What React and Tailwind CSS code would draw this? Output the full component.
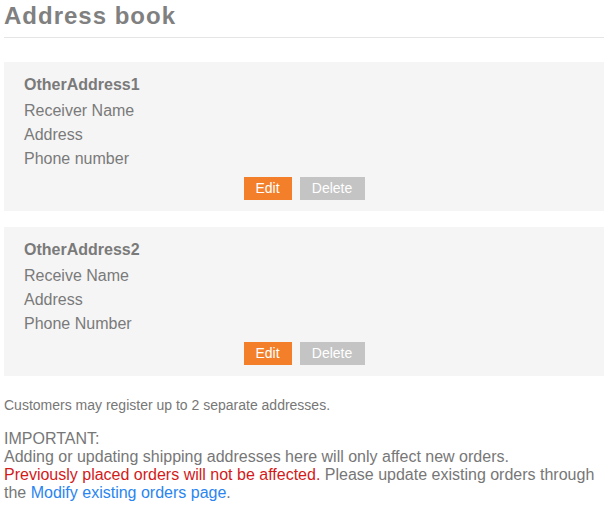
const addresses = [
  { id: 1, title: 'OtherAddress1', lines: ['Receiver Name', 'Address', 'Phone number'] },
  { id: 2, title: 'OtherAddress2', lines: ['Receive Name', 'Address', 'Phone Number'] },
];

const AddressCard = ({ item }) => (
  <div className="bg-[#f5f5f5] px-5 pt-[11px] pb-[11px] mb-4">
    <div className="font-bold text-base leading-6 mb-[2px] text-[#7a7a7a]">{item.title}</div>
    {item.lines.map((l) => (
      <div key={l} className="text-base leading-6 text-[#7a7a7a]">{l}</div>
    ))}
    <div className="flex justify-center gap-2 mt-[6px]">
      <button className="w-12 h-[23px] bg-[#f47f2b] text-white text-sm leading-[23px]">Edit</button>
      <button className="w-[65px] h-[23px] bg-[#c4c4c4] text-white text-sm leading-[23px]">Delete</button>
    </div>
  </div>
);

export default function App() {
  return (
    <div className="bg-white min-h-screen" style={{ fontFamily: '"Liberation Sans", Arial, sans-serif' }}>
      <div className="w-[600px] ml-1">
        {/* tiêu đề */}
        <h1 className="text-2xl font-bold tracking-[1px] text-[#808080] leading-8 pb-[5px] border-b border-[#e5e5e5]">
          Address book
        </h1>

        <div className="mt-6">
          {addresses.map((a) => (
            <AddressCard key={a.id} item={a} />
          ))}
        </div>

        <p className="text-sm text-[#777] leading-5 mt-[19px]">Customers may register up to 2 separate addresses.</p>

        <div className="mt-[15px] text-base leading-[18px] text-[#777]">
          <div>IMPORTANT:</div>
          <div>Adding or updating shipping addresses here will only affect new orders.</div>
          <div>
            <span className="text-[#d21a1a]">Previously placed orders will not be affected.</span> Please update existing
            orders through the <a className="text-[#2a85f0]">Modify existing orders page</a>.
          </div>
        </div>
      </div>
    </div>
  );
}
